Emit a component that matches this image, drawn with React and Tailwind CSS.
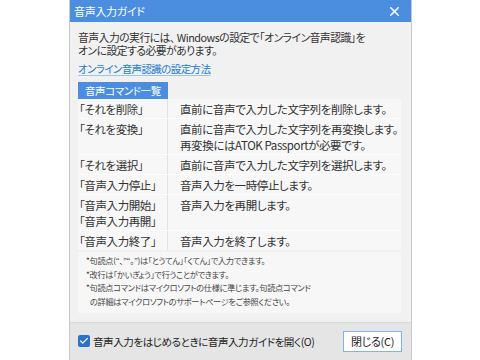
import { X, Check } from "lucide-react"

const font = { fontFamily: '"Noto Sans CJK JP", "Noto Sans", sans-serif' }

const commands = [
  { cmd: ["「それを削除」"], desc: ["直前に音声で入力した文字列を削除します。"] },
  { cmd: ["「それを変換」"], desc: ["直前に音声で入力した文字列を再変換します。", "再変換にはATOK Passportが必要です。"] },
  { cmd: ["「それを選択」"], desc: ["直前に音声で入力した文字列を選択します。"] },
  { cmd: ["「音声入力停止」"], desc: ["音声入力を一時停止します。"] },
  { cmd: ["「音声入力開始」", "「音声入力再開」"], desc: ["音声入力を再開します。"] },
  { cmd: ["「音声入力終了」"], desc: ["音声入力を終了します。"] },
]

export default function App() {
  return (
    <div className="w-[480px] h-[360px] bg-white overflow-hidden [font-feature-settings:'palt'] whitespace-nowrap" style={font}>
      <div className="ml-[69px] w-[343px] h-[360px] border-x border-[#c9c9c9] flex flex-col bg-[#f1f1f1]">
        {/* Title bar */}
        <div className="h-[22px] bg-[#4b8ee0] flex items-center justify-between pl-[4px] pr-[9px]">
          <span className="text-white text-[11px] tracking-[-0.3px] leading-none">音声入力ガイド</span>
          <X size={15} strokeWidth={2.5} className="text-white" />
        </div>

        {/* Body */}
        <div className="flex-1 px-[8px] pt-[9px]">
          <p className="text-[10.8px] leading-[13px] text-[#333] tracking-[-0.5px]">
            音声入力の実行には、<span className="ml-[2px]">Windows</span>の設定で「オンライン音声認識」を
            <br />
            オンに設定する必要があります。
          </p>
          <p className="mt-[5px] text-[10.5px] leading-[13px] text-[#1d7ad6] tracking-[-0.6px] underline decoration-[#9cc6f0] underline-offset-2">
            オンライン音声認識の設定方法
          </p>

          <div className="mt-[7px] w-[90px] h-[17px] bg-[#4b8ee0] text-white text-[10.5px] tracking-[-0.4px] flex items-center pl-[7px]">
            音声コマンド一覧
          </div>

          <div className="w-[323px] flex flex-col gap-[1px] bg-[#fdfdfd] tracking-[-0.4px]">
            {commands.map((row, i) => (
              <div key={i} className="flex bg-[#f7f7f7] text-[11.5px] leading-[16px] text-[#333]">
                <div className="w-[90px] shrink-0 border-r border-[#e2e2e2] pl-[1px] pt-[2px] pb-[1px]">
                  {row.cmd.map((c) => (
                    <div key={c}>{c}</div>
                  ))}
                </div>
                <div className="flex-1 pl-[12px] pt-[2px] pb-[1px]">
                  {row.desc.map((d) => (
                    <div key={d}>{d}</div>
                  ))}
                </div>
              </div>
            ))}
          </div>

          <div className="mt-[2px] w-[323px] h-[61px] bg-[#f7f7f7] pl-[8px] pt-[2px] text-[8.2px] leading-[13.5px] text-[#444] tracking-[-0.3px]">
            <div>*句読点(“、”“。”)は「とうてん」「くてん」で入力できます。</div>
            <div>*改行は「かいぎょう」で行うことができます。</div>
            <div>*句読点コマンドはマイクロソフトの仕様に準じます。句読点コマンド</div>
            <div className="pl-[4px]">の詳細はマイクロソフトのサポートページをご参照ください。</div>
          </div>
        </div>

        {/* Footer */}
        <div className="h-[38px] bg-[#e5e5e5] border-t border-[#dadada] flex items-center justify-between pl-[8px] pr-[9px]">
          <div className="flex items-center gap-[3px]">
            <div className="w-[12px] h-[12px] bg-[#2b73c8] rounded-[2px] flex items-center justify-center">
              <Check size={10} strokeWidth={3} className="text-white" />
            </div>
            <span className="text-[10.6px] text-[#222] tracking-[-0.5px]">音声入力をはじめるときに音声入力ガイドを開く(O)</span>
          </div>
          <button className="w-[59px] h-[21px] bg-white border border-[#7fb3ea] text-[11px] text-[#222] tracking-[-0.3px] flex items-center justify-center">
            閉じる(C)
          </button>
        </div>
      </div>
    </div>
  )
}
